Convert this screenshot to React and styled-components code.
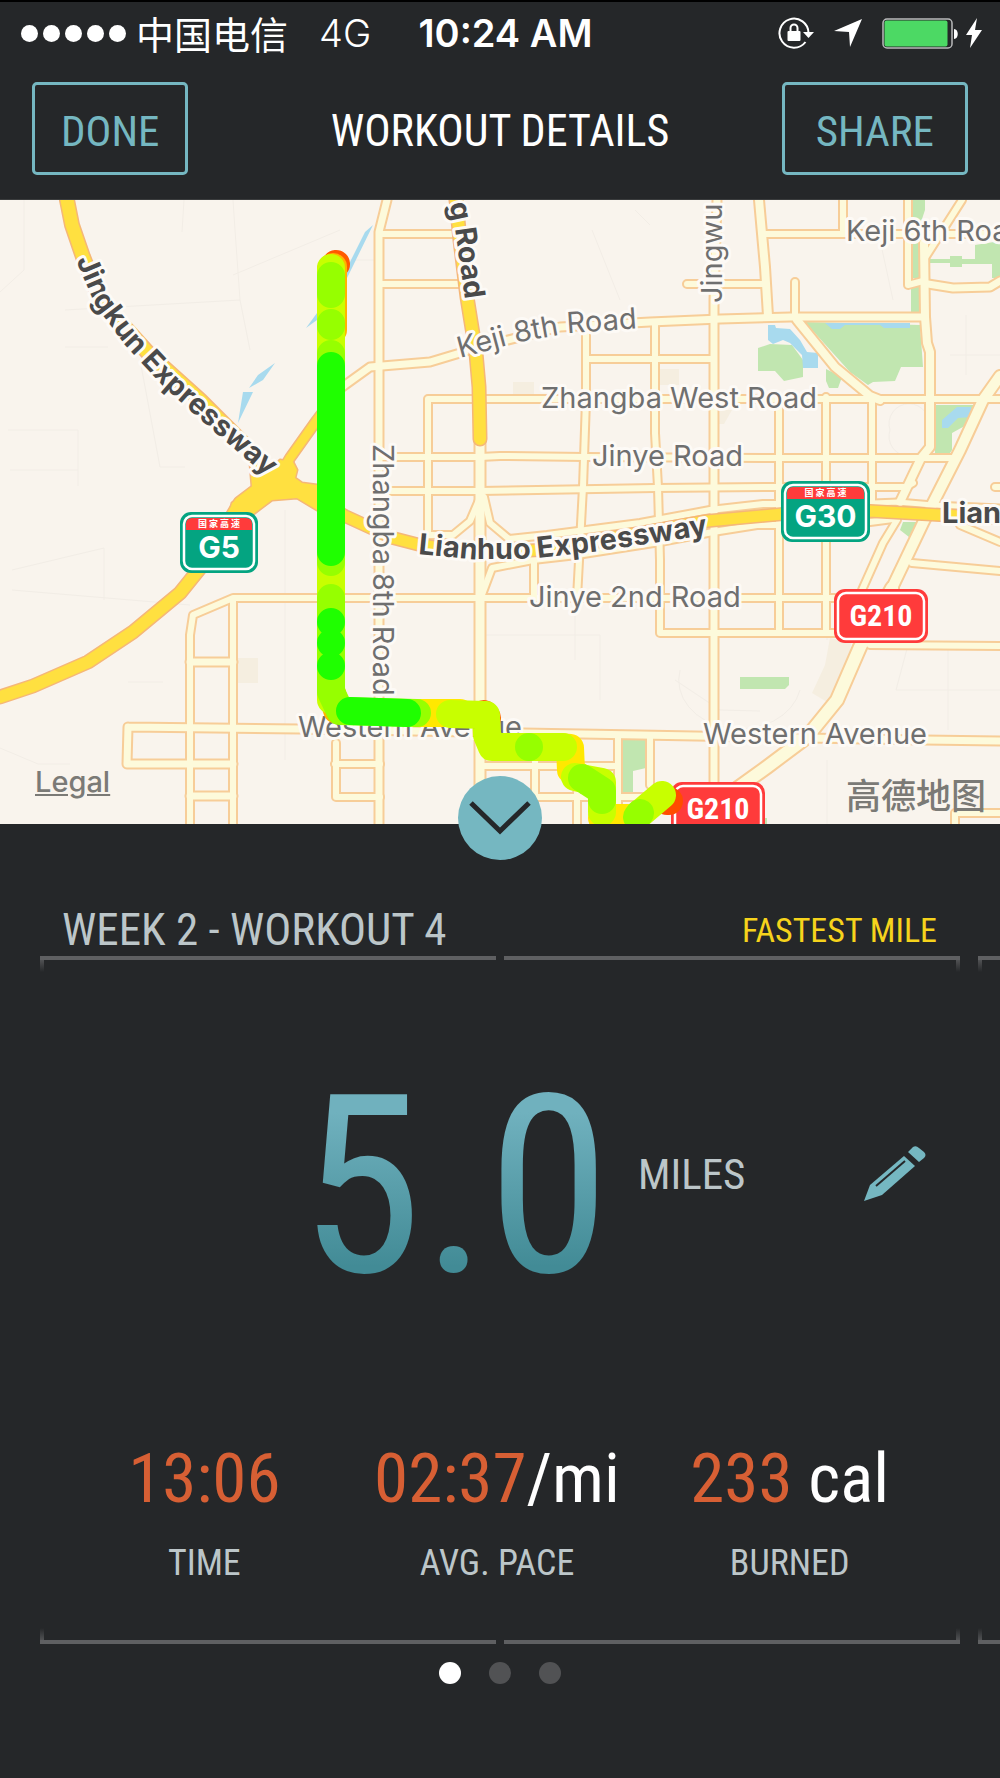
import React, { Fragment } from "react";
import styled, { createGlobalStyle } from "styled-components";

const colors = {
    background: "#252729",
    teal: "#75b7c1",
    grey: "#bcc6c9",
    orange: "#d75f34",
    yellow: "#f6d31c",
    line: "#5f6062",
};

const condensed = `"Roboto Condensed", Roboto, "Liberation Sans", sans-serif`;
const system = `Inter, "Noto Sans CJK SC", sans-serif`;

const GlobalStyle = createGlobalStyle`
    * {
        box-sizing: border-box;
    }

    body {
        margin: 0;
        background: ${colors.background};
        font-family: ${condensed};
    }

    h1, h2, p, dl, dd {
        margin: 0;
        font-weight: 400;
    }

    button {
        padding: 0;
        font: inherit;
        cursor: pointer;
    }
`;

/* ---------- status bar ---------- */

const LockIcon = () => (
    <svg width="36" height="34" viewBox="0 0 36 34" fill="none" stroke="#fff" strokeWidth="2">
        <path d="M30.5 17A14.5 14.5 0 1 0 27.5 26" />
        <path d="M25 16h11l-5.5 6z" fill="#fff" stroke="none" />
        <path d="M12.500 16v-4a3.500 3.500 0 0 1 7 0v4" />
        <rect x="9.500" y="15" width="13" height="10" rx="1" fill="#fff" stroke="none" />
    </svg>
);

const ArrowIcon = () => (
    <svg width="28" height="30" viewBox="0 0 28 30" fill="#fff">
        <path d="M28 1 16 29 15 14 0 13z" />
    </svg>
);

const BatteryIcon = () => (
    <svg width="77" height="32" viewBox="0 0 77 32">
        <rect x="1" y="2" width="69" height="29" rx="4" fill="none" stroke="#b9babb" strokeWidth="1.500" />
        <rect x="2.500" y="3.500" width="63" height="26" rx="2" fill="#4cd964" />
        <path d="M72 12c5 0 5 10 0 10z" fill="#fff" />
    </svg>
);

const BoltIcon = () => (
    <svg width="16" height="30" viewBox="0 0 16 30" fill="#fff">
        <path d="M11 0 0 17h6L4 30 16 12H9z" />
    </svg>
);

const StatusBar = () => (
    <StatusRow>
        <Carrier>
            <Signal>
                {[1, 2, 3, 4, 5].map((n) => <SignalDot key={n} />)}
            </Signal>
            <CarrierName>中国电信</CarrierName>
            <Network>4G</Network>
        </Carrier>
        <Clock>10:24 AM</Clock>
        <StatusIcons>
            <LockIcon />
            <ArrowIcon />
            <BatteryIcon />
            <BoltIcon />
        </StatusIcons>
    </StatusRow>
);

const StatusRow = styled.div`
    display: grid;
    grid-template-columns: 1fr auto 1fr;
    align-items: center;
    height: 64px;
    padding: 0 18px 0 21px;
    border-top: 2px solid #000;
    color: #fff;
    font-family: ${system};
`;

const Carrier = styled.div`
    display: flex;
    align-items: center;
    font-size: 38px;
    font-weight: 300;
    line-height: 48px;
`;

const Signal = styled.span`
    display: flex;
    gap: 5px;
    margin-right: 10px;
`;

const SignalDot = styled.span`
    width: 17px;
    height: 17px;
    border-radius: 50%;
    background: #fff;
`;

const CarrierName = styled.span`
    font-family: "Noto Sans CJK SC", sans-serif;
    font-weight: 400;
    white-space: nowrap;
`;

const Network = styled.span`
    margin-left: 31px;
`;

const Clock = styled.span`
    padding-left: 8px;
    font-size: 38px;
    font-weight: 600;
    line-height: 48px;
`;

const StatusIcons = styled.div`
    display: flex;
    align-items: center;
    justify-content: flex-end;

    svg + svg {
        margin-left: 20px;
    }

    svg:last-child {
        margin-left: 7px;
    }
`;

/* ---------- nav bar ---------- */

const NavBar = styled.header`
    display: grid;
    grid-template-columns: 1fr auto 1fr;
    align-items: center;
    padding: 18px 32px 24px;
    border-bottom: 1px solid #3a3c3d;
`;

const NavButton = styled.button`
    justify-self: ${(p) => (p.$end ? "end" : "start")};
    height: 93px;
    padding: 4px ${(p) => (p.$end ? "31px" : "26px")} 0;
    border: 3px solid ${colors.teal};
    border-radius: 5px;
    background: none;
    color: ${colors.teal};
    font-size: 43px;
    line-height: 56px;
`;

const Title = styled.h1`
    padding-top: 4px;
    color: #fff;
    font-size: 44px;
    line-height: 56px;
`;

/* ---------- map ---------- */

// minor roads: [path, width]
const roads = [
    ["M387 200 379 232V824", 7],
    ["M379 234H455M379 284H462", 6],
    ["M336 392 345 385 370 367 430 362 480 347 560 327 650 322 720 319 790 317H925", 7],
    ["M379 457H480L500 456 585 457 785 458H953M379 491H480L655 488 773 487H906L913 483", 6],
    ["M428 533V399H1000", 6],
    ["M480 440V824", 9],
    ["M428 535H453L470 521 479 500M484 497 490 523 509 539 547 535 640 523 710 510 763 504H785", 6],
    ["M480 600 492 568 533 560 577 555 660 542 713 532 757 525H785M870 522 893 519", 6],
    ["M873 503 898 502 933 505 1000 508", 5],
    ["M586 323V400L583 487 577 598M534 558V598", 6],
    ["M588 359H714M655 323V433L658 487 660 560V633H835", 6],
    ["M717 200 714 300V782", 7],
    ["M759 200 765 267 768 316", 8],
    ["M766 234H1000M843 200V234M687 284H764M795 282V317", 6],
    ["M797 320 835 367 870 396 880 400", 8],
    ["M908 200V285L923 281M962 200 925 258", 6],
    ["M924 243 925 317 927 343 930 352V447L921 458 900 502", 8],
    ["M928 284 953 288 990 287 1000 281", 7],
    ["M779 400V633M826 397V633M872 397V504", 6],
    ["M1000 376 983 400 960 450 933 503 923 523 892 588", 10],
    ["M892 588 860 647 837 700 807 737 767 767 735 790", 12],
    ["M897 520 883 543 862 590", 6],
    ["M912 563 1000 571M960 525 1000 542M870 645 1000 646", 6],
    ["M190 824V635L193 615 233 598H835M233 600V824", 6],
    ["M190 662H233M128 727 300 729 640 735 923 740 1000 741M128 727 127 764H233M190 796H233", 7],
    ["M336 743V797H380M335 764H380", 6],
    ["M483 766H618M535 735V797H643M577 793V824M618 735V824M650 735V785", 6],
    ["M955 824V813H1000M1000 487H995", 6],
];

const highways = [
    ["M67 200 72 225 83 257 100 300 150 355 200 400 247 447 270 480", 13],
    ["M0 697 33 686 88 662 133 632 180 593 205 562 240 503 265 484", 12],
    ["M280 475 290 458 317 420 338 392", 9],
    ["M275 484 300 490 345 516 393 538 420 545 477 553 540 550 640 533 707 521 783 514 870 511 940 515 1000 518", 11],
    ["M456 200 460 240 467 297 476 353 479 387 480 439", 12],
];

const interchange = "M250 463 252 487 247 492 232 503 229 515H252L272 500 297 498 317 510V485L302 483 295 478 297 470 293 462 280 460 263 480 247 455Z";

const parks = [
    "M805 322 920 325 923 367H901L895 381 873 382 868 385 850 372Z",
    "M758 348 770 344 792 345 803 360V377L784 381 775 371H758Z",
    "M826 369 842 377 838 388H829L826 381Z",
    "M912 200H925V210L920 225V278H912ZM911 287 919 286V313H911Z",
    "M930 259H950V256H962V259H975V245L1000 241V278H992V264H962V267H950V263H930Z",
    "M935 405H978L970 423 952 433V450L948 456H935Z",
    "M740 677H789V685L785 689H740ZM903 522H918L909 537 900 530ZM905 553 886 588 893 570Z",
    "M623 740H646V768L633 771V792H623ZM765 818h2v6h-2z",
];

const water = [
    "M825 323H910V328H884L880 325H845L840 329H832Z",
    "M768 325H775L776 328 790 329 800 340 807 352 818 353V368H803L802 355 790 343 783 340 773 344 768 340Z",
    "M957 407H971V417L958 418 948 428H942V420Z",
    "M306 328 317 313V320ZM373 225 365 232 345 272 346 280 350 272ZM275 363 258 375 249 388 263 380ZM243 392H253L238 423Z",
];

const track = [
    ["#ff5a00", "M336 264 331 270V420M331 560V600M484 714 487 718"],
    ["#ffb400", "M333 267V330M331 690 337 710"],
    ["#ffe800", "M331 330V350M417 713H460M560 747 570 748 571 770 580 778M602 818H628"],
    ["#c8ff00", "M331 268V700M450 714 486 715 487 735 492 747H563M575 777 602 782V812M642 812 662 795"],
    ["#96ff00", "M331 276V294M331 323V326M331 354V562M331 598V692L340 711 417 713M529 747h0M582 778 602 791V800M640 813 637 817"],
    ["#1fff00", "M331 366V552M331 622h0M331 643h0M331 666h0M350 711 407 713"],
];

const Shield = ({ x, y, width, label, green }) => (
    <g transform={`translate(${x} ${y})`}>
        <rect width={width} height={green ? 61 : 54} rx="11" fill={green ? "#04a481" : "#ff3b3b"} />
        <rect x="4" y="4" width={width - 8} height={green ? 53 : 46} rx="8" fill="none" stroke="#fff" strokeWidth="2.500" />
        {green && (
            <Fragment>
                <path d={`M6 18V12Q6 6 12 6H${width - 12}Q${width - 6} 6 ${width - 6} 12V18Z`} fill="#ff3b3b" />
                <ShieldCaption x={width / 2} y="15">国 家 高 速</ShieldCaption>
            </Fragment>
        )}
        <ShieldText $green={green} x={width / 2} y={green ? 46 : 37}>{label}</ShieldText>
    </g>
);

const WorkoutMap = () => (
    <MapSection>
        <MapDrawing viewBox="0 200 1000 624" role="img" aria-label="Workout route">
            <defs>
                <path id="jingkun" d="M76 260 95 305 125 345 165 388 210 428 285 492" />
                <path id="ringroad" d="M449 204 456 236 468 320" />
                <path id="keji8" d="M460 358 520 342 570 333 640 328" />
                <path id="lianhuo" d="M418 554 470 559 530 559 600 551 720 533" />
            </defs>
            <rect y="200" width="1000" height="624" fill="#f9f4ed" />
            <g fill="none" stroke="#f2ede6" strokeWidth="1">
                <path d="M24 200V270L0 292M184 200 182 232M233 200 235 230 240 300 250 350M233 275 340 230M65 310 240 300M65 347H108M8 430H78V486M10 470H78M140 360 160 467H185M12 570 104 548V600M12 590 190 605M285 510V760M128 682H163M0 748 38 764H70M380 260H340M635 210 650 225M592 230 620 300M486 635H600V700M575 560V660M715 570V640M675 680 720 710 760 711M893 300 880 240M966 315V375M950 355H1000M908 645 896 690H1000M948 650V730M827 600V640M827 760V824" />
                <path d="M890 430a20 20 0 1 0 38 0a20 20 0 1 0-38 0M680 670a50 40 0 0 0 120 20" />
            </g>
            <path d="M513 382h21v13h-21zM660 369h19v16h-19zM720 410h12l-8 14h-5zM238 658h20v25h-20zM830 638 851 643 850 657 827 702 812 693 825 665Z" fill="#f5eee0" />
            {parks.map((d) => <path key={d} d={d} fill="#c1e6b0" />)}
            {water.map((d) => <path key={d} d={d} fill="#a8daee" />)}

            <g fill="none" strokeLinecap="round" strokeLinejoin="round">
                {roads.map(([d, w]) => <path key={d} d={d} stroke="#f7cd98" strokeWidth={w + 4} />)}
                {roads.map(([d, w]) => <path key={d} d={d} stroke="#fdfadb" strokeWidth={w} />)}
                {highways.map(([d, w]) => <path key={d} d={d} stroke="#f5b778" strokeWidth={w + 3} />)}
                <path d={interchange} stroke="#f5b778" strokeWidth="3" />
                {highways.map(([d, w]) => <path key={d} d={d} stroke="#ffe040" strokeWidth={w} />)}
                <path d={interchange} fill="#ffe040" />
            </g>

            <RoadName $major><textPath href="#jingkun">Jingkun Expressway</textPath></RoadName>
            <RoadName $major><textPath href="#ringroad">g Road</textPath></RoadName>
            <RoadName><textPath href="#keji8">Keji 8th Road</textPath></RoadName>
            <RoadName $major><textPath href="#lianhuo">Lianhuo Expressway</textPath></RoadName>
            <RoadName transform="translate(722 303) rotate(-90)">Jingwu</RoadName>
            <RoadName transform="translate(373 444) rotate(90)">Zhangba 8th Road</RoadName>
            <RoadName x="846" y="241">Keji 6th Road</RoadName>
            <RoadName x="541" y="408">Zhangba West Road</RoadName>
            <RoadName x="592" y="466">Jinye Road</RoadName>
            <RoadName x="529" y="607">Jinye 2nd Road</RoadName>
            <RoadName x="298" y="737">Western Avenue</RoadName>
            <RoadName x="703" y="744">Western Avenue</RoadName>
            <RoadName $major x="942" y="523">Lian</RoadName>

            <Shield green x={180} y={512} width={78} label="G5" />
            <Shield green x={781} y={481} width={89} label="G30" />
            <Shield x={834} y={589} width={94} label="G210" />
            <Shield x={671} y={782} width={94} label="G210" />

            <g fill="none" strokeWidth="28" strokeLinecap="round" strokeLinejoin="round">
                <path d="M667 801h2" stroke="#ff4d00" />
                {track.map(([stroke, d]) => <path key={stroke} d={d} stroke={stroke} />)}
            </g>
        </MapDrawing>
        <Attribution>
            <LegalLink href="#legal">Legal</LegalLink>
            <MapProvider>高德地图</MapProvider>
        </Attribution>
        <CollapseButton aria-label="Collapse map">
            <svg width="62" height="34" viewBox="0 0 62 34" fill="none" stroke="#252729" strokeWidth="5">
                <path d="M2 2 31 30 60 2" />
            </svg>
        </CollapseButton>
    </MapSection>
);

const MapSection = styled.section`
    position: relative;
`;

const MapDrawing = styled.svg`
    display: block;
    width: 100%;
    height: auto;
`;

const RoadName = styled.text`
    fill: ${(p) => (p.$major ? "#4a4a4a" : "#6f6f6f")};
    stroke: #fdfaf6;
    stroke-width: 6px;
    stroke-linejoin: round;
    paint-order: stroke;
    font-family: ${system};
    font-size: 29px;
    font-weight: ${(p) => (p.$major ? 700 : 400)};
`;

const ShieldText = styled.text`
    fill: #fff;
    text-anchor: middle;
    font-family: ${(p) => (p.$green ? system : condensed)};
    font-size: 30px;
    font-weight: 700;
`;

const ShieldCaption = styled.text`
    fill: #fff;
    text-anchor: middle;
    font-family: "Noto Sans CJK SC", sans-serif;
    font-size: 9px;
    font-weight: 700;
`;

const Attribution = styled.div`
    position: absolute;
    right: 14px;
    bottom: 0;
    left: 35px;
    display: flex;
    align-items: center;
    justify-content: space-between;
    line-height: 36px;
`;

const LegalLink = styled.a`
    margin-bottom: 24px;
    color: #7b7a76;
    font-family: ${system};
    font-size: 29px;
    font-weight: 500;
`;

const MapProvider = styled.span`
    color: #7b7a76;
    font-family: "Noto Sans CJK SC", sans-serif;
    font-size: 35px;
    font-weight: 500;
`;

const CollapseButton = styled.button`
    position: absolute;
    bottom: -36px;
    left: calc(50% - 42px);
    display: flex;
    align-items: center;
    justify-content: center;
    width: 84px;
    height: 84px;
    border: none;
    border-radius: 50%;
    background: ${colors.teal};
`;

/* ---------- workout slides ---------- */

const stats = [
    { label: "TIME", value: "13:06" },
    { label: "AVG. PACE", value: "02:37", unit: "/mi" },
    { label: "BURNED", value: "233", unit: " cal" },
];

const PencilIcon = () => (
    <svg width="62" height="56" viewBox="0 0 62 56" fill={colors.teal}>
        <path d="M0 55 6 39 40 10 51 20 18 49Z" />
        <path d="M44 6 49 1Q52-1 55 2L60 6Q63 9 60 12L55 16Z" />
        <path d="M12 40 41 15" stroke={colors.background} strokeWidth="2" />
    </svg>
);

const Frame = ({ bottom }) => (
    <Brackets $bottom={bottom}>
        <Bracket $side="left" $bottom={bottom} />
        <Bracket $side="right" $bottom={bottom} />
    </Brackets>
);

const Summary = () => (
    <Slide>
        <SlideHeader>
            <WorkoutName>WEEK 2 - WORKOUT 4</WorkoutName>
            <Badge>FASTEST MILE</Badge>
        </SlideHeader>
        <Frame />
        <Distance>
            <Amount>5.0</Amount>
            <Unit>MILES</Unit>
            <EditButton aria-label="Edit distance"><PencilIcon /></EditButton>
        </Distance>
        <Stats>
            {stats.map((stat) => (
                <Stat key={stat.label}>
                    <StatLabel>{stat.label}</StatLabel>
                    <StatValue>{stat.value}<StatUnit>{stat.unit}</StatUnit></StatValue>
                </Stat>
            ))}
        </Stats>
        <Frame bottom />
    </Slide>
);

const Carousel = styled.main`
    display: flex;
    gap: 18px;
    padding: 78px 0 0 40px;
    overflow: hidden;
`;

const Slide = styled.section`
    display: flex;
    flex: 0 0 calc(100% - 40px);
    flex-direction: column;
    justify-content: space-between;
`;

const SlideHeader = styled.div`
    display: flex;
    align-items: center;
    justify-content: space-between;
    height: 54px;
    padding: 2px 23px 0 22px;
`;

const WorkoutName = styled.h2`
    color: ${colors.grey};
    font-size: 45px;
    line-height: 54px;
`;

const Badge = styled.p`
    color: ${colors.yellow};
    font-size: 34px;
    line-height: 54px;
`;

const Brackets = styled.div`
    display: flex;
    gap: 8px;
    height: 16px;
`;

const Bracket = styled.div`
    flex: 1;
    background:
        linear-gradient(${colors.line}, ${colors.line}) ${(p) => (p.$bottom ? "bottom" : "top")} / 100% 4px no-repeat,
        linear-gradient(${(p) => (p.$bottom ? "to top" : "to bottom")}, ${colors.line}, transparent) ${(p) => p.$side} / 4px 100% no-repeat;
`;

const Distance = styled.div`
    display: grid;
    grid-template-columns: 570px 1fr auto;
    align-items: center;
    height: 400px;
    padding: 4px 34px 0 0;
`;

const Amount = styled.p`
    justify-self: end;
    padding-top: 28px;
    background: linear-gradient(#70b1be 30%, #428b96 80%);
    background-clip: text;
    -webkit-background-clip: text;
    color: transparent;
    font-size: 248px;
    line-height: 280px;
`;

const Unit = styled.p`
    padding-left: 28px;
    color: ${colors.grey};
    font-size: 43px;
    line-height: 54px;
`;

const EditButton = styled.button`
    border: none;
    background: none;

    svg {
        display: block;
    }
`;

const Stats = styled.dl`
    display: grid;
    grid-template-columns: repeat(3, 1fr);
    height: 256px;
    padding: 67px 24px 0 18px;
`;

const Stat = styled.div`
    display: flex;
    flex-direction: column-reverse;
    justify-content: flex-end;
    align-items: center;
    gap: 20px;
`;

const StatLabel = styled.dt`
    color: ${colors.grey};
    font-size: 36px;
    line-height: 48px;
`;

const StatValue = styled.dd`
    color: ${colors.orange};
    font-size: 69px;
    line-height: 80px;
    white-space: pre;
`;

const StatUnit = styled.span`
    color: #fff;
`;

const NextSlide = styled(Slide)`
    padding-top: 54px;
`;

/* ---------- page dots ---------- */

const Pager = styled.nav`
    display: flex;
    justify-content: center;
    gap: 28px;
    padding: 18px 0 94px;
`;

const PageDot = styled.button`
    width: 22px;
    height: 22px;
    border: none;
    border-radius: 50%;
    background: ${(p) => (p.$active ? "#fff" : "#515254")};
`;

export default function App() {
    return (
        <Fragment>
            <GlobalStyle />
            <StatusBar />
            <NavBar>
                <NavButton>DONE</NavButton>
                <Title>WORKOUT DETAILS</Title>
                <NavButton $end>SHARE</NavButton>
            </NavBar>
            <WorkoutMap />
            <Carousel>
                <Summary />
                <NextSlide aria-hidden="true">
                    <Frame />
                    <Frame bottom />
                </NextSlide>
            </Carousel>
            <Pager aria-label="Pages">
                <PageDot $active aria-label="Page 1" />
                <PageDot aria-label="Page 2" />
                <PageDot aria-label="Page 3" />
            </Pager>
        </Fragment>
    );
}
